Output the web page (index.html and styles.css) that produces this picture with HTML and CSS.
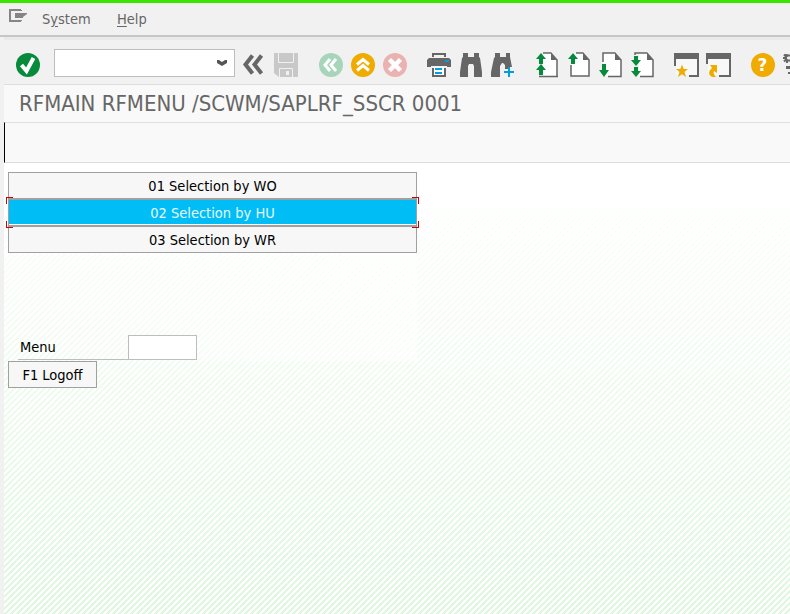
FILE: index.html
```html
<!DOCTYPE html>
<html lang="en">
<head>
<meta charset="utf-8">
<title>RFMAIN RFMENU</title>
<link rel="stylesheet" href="styles.css">
</head>
<body>
<header class="menubar">
  <svg class="menu-icon" width="18" height="13" viewBox="0 0 18 13"><path d="M12 1H1v11h11M12 2V1M12 11v1" fill="none" stroke="#858585" stroke-width="2"/><path d="M6 4h12v1l-4 3v1H6z" fill="#858585"/></svg>
  <span class="menu-item system">S<u>y</u>stem</span>
  <span class="menu-item help"><u>H</u>elp</span>
</header>
<main class="window">
  <div class="toolbar">
    <svg class="ic ok" viewBox="0 0 24 24"><circle cx="12" cy="12" r="12" fill="#078a3b"/><path d="M5.500 12l5 6L17.500 5" fill="none" stroke="#fff" stroke-width="4"/></svg>
    <div class="command"><svg width="10" height="7" viewBox="0 0 10 7"><path d="M0 0h2l3 2 3-2h2v3L5 6 0 3z" fill="#555"/></svg></div>
    <svg class="ic back" viewBox="0 0 24 24"><path d="M10.500 2.500L3.500 11.500l7 9M19.500 2.500l-7 9 7 9" fill="none" stroke="#666" stroke-width="4"/></svg>
    <svg class="ic save" viewBox="0 0 24 24"><path d="M0 0h24v24H5l-5-4z" fill="#c8c8c8"/><path d="M4.500 0v9.500h15V0M5.500 24v-8.500h13V24" fill="none" stroke="#f1f1f1"/><path d="M12 18h3v4h-3z" fill="#f1f1f1"/></svg>
    <svg class="ic rnd1" viewBox="0 0 24 24"><circle cx="12" cy="12" r="12" fill="#a6d5b9"/><path d="M11 6L6 12l5 6M17 6l-5 6 5 6" fill="none" stroke="#fff" stroke-width="3"/></svg>
    <svg class="ic rnd2" viewBox="0 0 24 24"><circle cx="12" cy="12" r="12" fill="#f0ab00"/><path d="M6 11.500l6-5 6 5M6 17.500l6-5 6 5" fill="none" stroke="#fff" stroke-width="3"/></svg>
    <svg class="ic rnd3" viewBox="0 0 24 24"><circle cx="12" cy="12" r="12" fill="#ebb2b2"/><path d="M6.500 6.500l11 11M17.500 6.500l-11 11" stroke="#fff" stroke-width="4.500"/></svg>
    <svg class="ic print" viewBox="0 0 24 24"><path d="M5 4V0h14v4h-2V2H7v2zM2 5h20l2 2v7h-4v-1H4v1H0V7zM5 15h2v7h10v-7h2v9H5z" fill="#666"/><path d="M7 14h10v8H7z" fill="#fff"/><path d="M18 7h4v2h-4zM8 15h7v2H8zM8 19h7v2H8z" fill="#009de0"/></svg>
    <svg class="ic find" viewBox="0 0 24 24"><path d="M4 0h5v4h6V0h5v4l1 1 2 14v5h-8V13l-1-2h-4l-1 2v11H1v-5L3 5l1-1z" fill="#666"/></svg>
    <svg class="ic findn" viewBox="0 0 24 24"><path d="M4 0h5v4h6V0h4v4l2 10h-4v2h-3v-4l-2-2h-1l-2 3v11H0v-5L3 5l1-1z" fill="#666"/><path d="M18 14v10M13 19h10" stroke="#009de0" stroke-width="2"/></svg>
    <svg class="ic p1" viewBox="0 0 24 26"><path d="M8 1h8l6 6v17H8z" fill="#fff"/><path d="M8 1h8M4 24.500h19M22 8v17" fill="none" stroke="#666" stroke-width="1.500"/><path d="M16 0l7 8h-7z" fill="#666"/><path d="M6 1L1 7h3v5h4V7h3zM6 12l-5 6h3v5h4v-5h3z" fill="#078a3b"/></svg>
    <svg class="ic p2" viewBox="0 0 24 26"><path d="M4 1h12l6 6v17H4z" fill="#fff"/><path d="M9 1h7M4 13v11h18V8" fill="none" stroke="#666" stroke-width="1.500"/><path d="M16 0l7 8h-7z" fill="#666"/><path d="M6 1L1 7h3v5h4V7h3z" fill="#078a3b"/></svg>
    <svg class="ic p3" viewBox="0 0 24 26"><path d="M4 1h12l6 6v17H4z" fill="#fff"/><path d="M4 10V1h12M9 24.500h13V8" fill="none" stroke="#666" stroke-width="1.500"/><path d="M16 0l7 8h-7z" fill="#666"/><path d="M3 12h4v6h3l-5 7-5-7h3z" fill="#078a3b"/></svg>
    <svg class="ic p4" viewBox="0 0 24 26"><path d="M8 1h8l6 6v17H8z" fill="#fff"/><path d="M4 3V1h12M9 24.500h13V8" fill="none" stroke="#666" stroke-width="1.500"/><path d="M16 0l7 8h-7z" fill="#666"/><path d="M3 4h4v4h3l-5 6-5-6h3zM3 15h4v4h3l-5 6-5-6h3z" fill="#078a3b"/></svg>
    <svg class="ic w1" viewBox="0 0 25 24"><path d="M2 6h21v16H2z" fill="#f8f8f8"/><path d="M0 0h25v24H15v-2h8V6H2v7H0z" fill="#666"/><path d="M0 13h2v9h13v2H0z" fill="#f1f1f1"/><path d="M8 11.500l1.700 4.500H14l-3.500 3L12 24l-4-2.800L4 24l1.500-5L2 16h4.300z" fill="#f0ab00"/></svg>
    <svg class="ic w2" viewBox="0 0 25 24"><path d="M2 6h21v16H2z" fill="#f8f8f8"/><path d="M0 0h25v24H13v-2h10V6H2v5H0z" fill="#666"/><path d="M4 12h7v8l-3-2c-1 2 0 4 2 6H7c-5-1-5-6-1-9z" fill="#f0ab00"/></svg>
    <svg class="ic q" viewBox="0 0 24 24"><circle cx="12" cy="12" r="12" fill="#f0ab00"/><text x="11.500" y="18" text-anchor="middle" class="qm">?</text></svg>
    <svg class="ic gear" viewBox="0 0 7 24"><path d="M3.500 1v2M0 5h2M1 1.500l2 2M1 8.500l2-2M4 8v2M7 2.500H4.500L3 4v2l1.500 1.500H7" fill="none" stroke="#666" stroke-width="2"/><path d="M3 13h4v3H3zM5 19h2v2H5z" fill="#666"/></svg>
  </div>
  <h1 class="title">RFMAIN RFMENU /SCWM/SAPLRF_SSCR 0001</h1>
  <div class="appbar"></div>
  <section class="canvas">
    <div class="form">
      <button class="row">01 Selection by WO</button>
      <button class="row selected"><span>02 Selection by HU</span><i class="corner tl"></i><i class="corner tr"></i><i class="corner bl"></i><i class="corner br"></i></button>
      <button class="row">03 Selection by WR</button>
      <div class="field"><label for="menu">Menu</label><input id="menu"></div>
    </div>
    <button class="logoff">F1 Logoff</button>
  </section>
</main>
</body>
</html>
```

FILE: styles.css
```css
* { box-sizing: border-box; }
body { margin: 0; height: 614px; overflow: hidden; background: #f1f1f1; font: 14.5px "DejaVu Sans Condensed", "DejaVu Sans", sans-serif; font-stretch: condensed; color: #000; }
svg { display: block; flex: none; }
.menubar { height: 37px; border-top: 3px solid #39e600; border-bottom: 2px solid #c6c6c6; display: flex; color: #666; }
.menu-icon { margin: 6px 0 0 9px; }
.menu-item { line-height: 32px; white-space: nowrap; }
.system { margin-left: 15px; width: 75px; }
u { text-underline-offset: 2px; }
.window { margin-left: 4px; height: 577px; display: flex; flex-direction: column; }
.toolbar { height: 47px; padding-top: 13px; display: flex; border-top: 3px solid #e9e9e9; }
.ic { width: 24px; height: 24px; }
.ok { margin-left: 12px; }
.command { margin: -4px 0 0 14px; width: 181px; height: 28px; background: #fff; border: 1px solid #bdbdbd; display: flex; justify-content: flex-end; align-items: center; padding-right: 7px; flex: none; }
.back { margin-left: 7px; }
.save { margin-left: 8px; }
.rnd1 { margin-left: 21px; }
.rnd2, .rnd3, .find, .findn { margin-left: 8px; }
.print { margin-left: 20px; }
.p1, .p2, .p3, .p4 { height: 26px; margin: -1px 0 0 8px; }
.p1 { margin-left: 20px; }
.w1, .w2 { width: 25px; }
.w1 { margin-left: 19px; }
.w2 { margin-left: 7px; }
.q { margin-left: 20px; }
.gear { width: 7px; margin-left: 8px; }
.qm { font: bold 17px "DejaVu Sans", sans-serif; fill: #fff; }
.title { margin: 0; height: 38px; border-top: 1px solid #dedede; background: #f9f9f9; font-size: 22px; font-weight: normal; line-height: 38px; padding-left: 15px; color: #666; white-space: nowrap; }
.appbar { height: 41px; background: #f9f9f9; border: solid #dedede; border-width: 1px 0; border-left: 1px solid #000; }
.canvas { flex: 1; padding: 9px 0 0 4px; background: linear-gradient(#fff 20px, rgba(255,255,255,0) 100%), repeating-linear-gradient(135deg, #dff7df 0 2.121px, #fff 2.121px 4.243px); }
.form { width: 409px; height: 189px; display: flex; flex-direction: column; background: linear-gradient(90deg, rgba(255,255,255,0), rgba(255,255,255,.6)); }
button { font: inherit; padding: 0; margin: 0; border: 1px solid #a0a0a0; border-radius: 0; background: #f7f7f7; color: #000; }
.row { height: 27px; flex: none; position: relative; }
.selected { z-index: 1; background: #00bdf5; color: #e6f9ff; box-shadow: inset 0 -1px #fff; }
.corner { position: absolute; width: 7px; height: 7px; border: 0 solid #d00000; }
.tl { left: -3px; top: -3px; border-width: 1px 0 0 1px; }
.tr { right: -3px; top: -3px; border-width: 1px 1px 0 0; }
.bl { left: -3px; bottom: -3px; border-width: 0 0 1px 1px; }
.br { right: -3px; bottom: -3px; border-width: 0 1px 1px 0; }
.field { display: flex; margin: 82px 0 0 10px; height: 25px; }
.field label { width: 110px; border-bottom: 1px solid #bdbdbd; line-height: 25px; padding-left: 2px; }
.field input { width: 69px; height: 25px; border: 1px solid #bdbdbd; background: #fff; padding: 0; border-radius: 0; }
.logoff { width: 89px; height: 27px; display: block; }
```
